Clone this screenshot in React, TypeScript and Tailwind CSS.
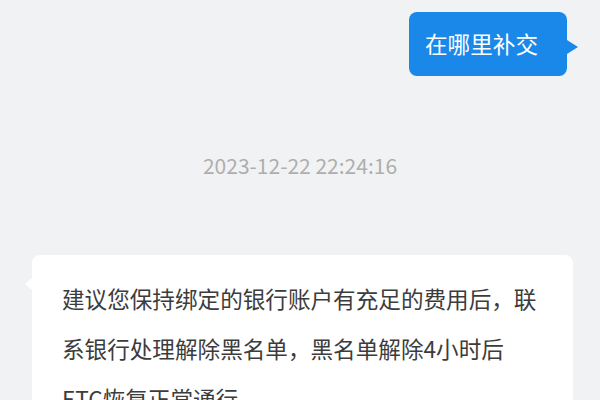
import React from "react";

const font = {
  fontFamily: '"Noto Sans CJK SC", "Noto Sans", sans-serif',
};

const SentBubble: React.FC<{ text: string }> = ({ text }) => (
  <div className="flex justify-end pr-[33px]">
    <div className="relative rounded-lg bg-[#1a88e8] pl-4 pr-[29px] py-[14px] text-[22.6px] leading-[36px] text-white">
      {text}
      <span className="absolute right-[-11px] top-[28px] h-0 w-0 border-y-[7px] border-l-[11px] border-y-transparent border-l-[#1a88e8]" />
    </div>
  </div>
);

const ReceivedBubble: React.FC<{ text: string }> = ({ text }) => (
  <div className="ml-[32px] mr-[27px]">
    <div className="relative rounded-lg bg-white pl-[30px] pr-[30px] pt-[19px] pb-4 text-[22.6px] leading-[50px] text-[#3c3c3c]">
      {text}
      <span className="absolute left-[-7px] top-[23px] h-0 w-0 border-y-[6px] border-r-[7px] border-y-transparent border-r-white" />
    </div>
  </div>
);

export default function App() {
  return (
    <div
      className="flex h-[400px] w-[600px] flex-col overflow-hidden bg-[#f1f2f3] pt-[12px]"
      style={font}
    >
      <SentBubble text="在哪里补交" />
      <div className="mt-[74px] text-center text-[21px] leading-[30px] text-[#aeaeae]">
        2023-12-22 22:24:16
      </div>
      <div className="mt-[75px]">
        <ReceivedBubble text="建议您保持绑定的银行账户有充足的费用后，联系银行处理解除黑名单，黑名单解除4小时后ETC恢复正常通行。" />
      </div>
    </div>
  );
}
